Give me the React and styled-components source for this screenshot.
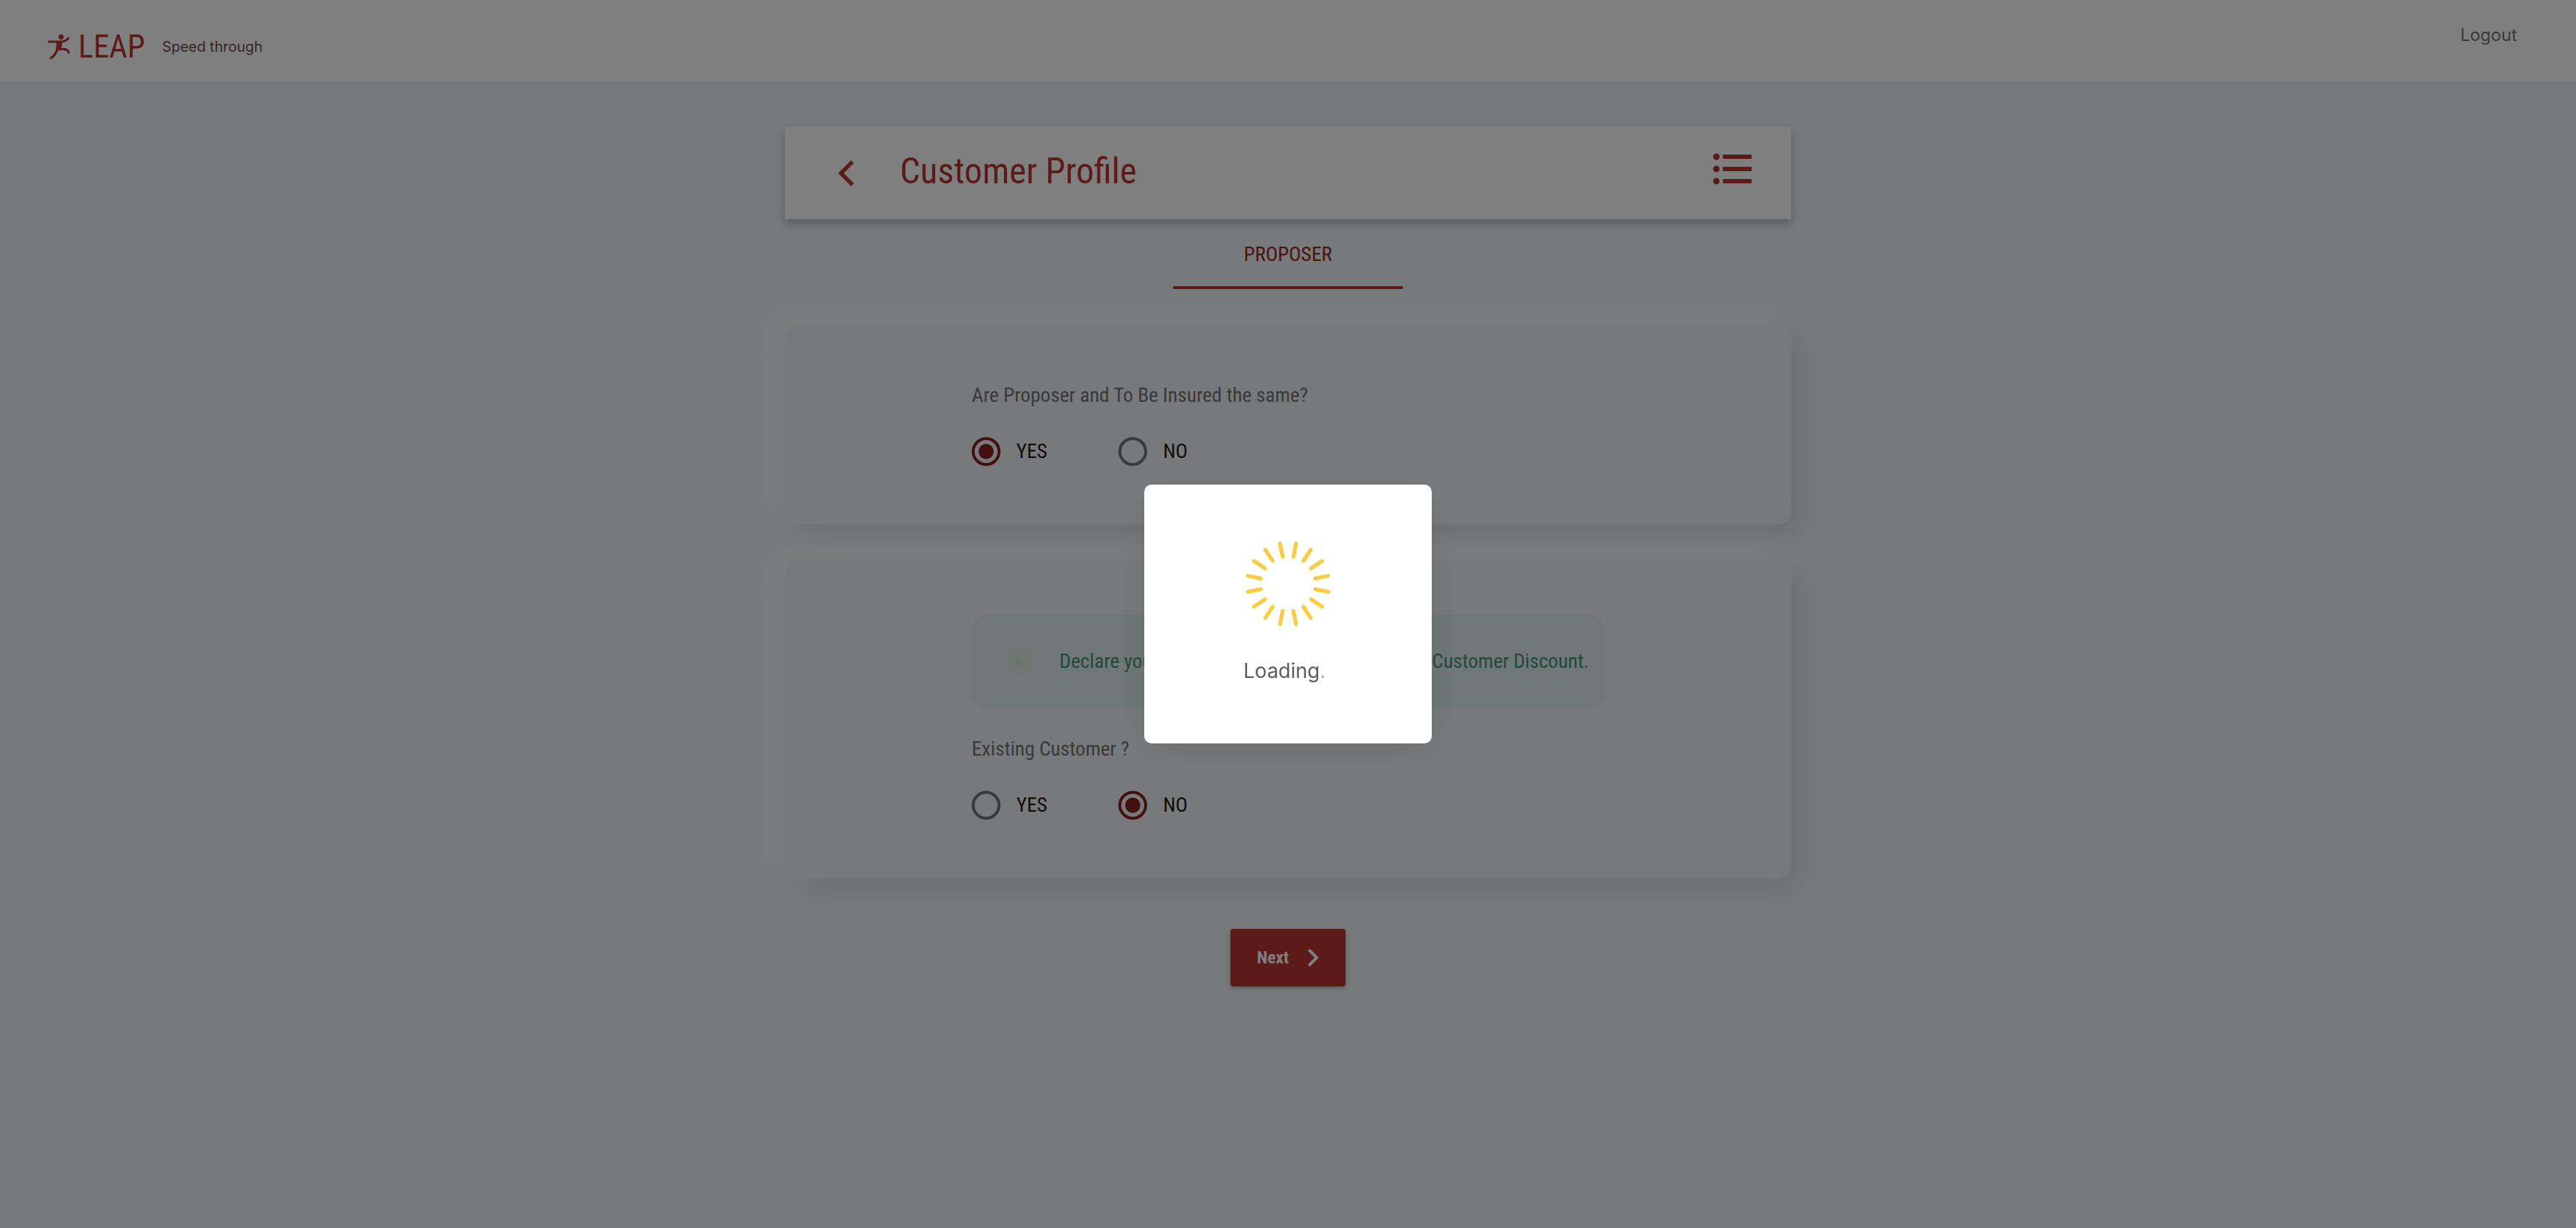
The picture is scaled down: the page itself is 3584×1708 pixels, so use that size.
import React from "react";
import styled, { createGlobalStyle } from "styled-components";

const narrow = `"Liberation Sans Narrow", "Roboto Condensed", Roboto, "Liberation Sans", sans-serif`;
const grotesk = `Inter, "Liberation Sans", sans-serif`;
const red = "#b93432";

const GlobalStyle = createGlobalStyle`
  *, *::before, *::after { box-sizing: border-box; }
  html, body, #root { min-height: 100vh; }
  body { margin: 0; background: #f0f3f7; font-family: ${narrow}; font-size: 28px; line-height: 40px; }
  h1, p, fieldset, legend { margin: 0; padding: 0; border: 0; font-weight: 400; }
`;

const Header = styled.header`
  display: flex;
  justify-content: space-between;
  align-items: flex-start;
  height: 116px;
  padding: 29px 82px 0 66px;
  background: #fff;
  border-bottom: 2px solid #e4e5e7;
`;

const Brand = styled.div`
  display: flex;
  align-items: center;
  height: 72px;
  font-family: ${grotesk};
`;

const BrandName = styled.span`
  margin: 0 24px 0 9px;
  font-family: ${narrow};
  font-size: 44px;
  color: ${red};
`;

const Tagline = styled.span`
  font-size: 20px;
  color: #6a4c4c;
`;

const Logout = styled.a`
  font-family: ${grotesk};
  font-size: 24px;
  color: #757575;
  text-decoration: none;
`;

const Main = styled.main`
  display: flex;
  flex-direction: column;
  align-items: center;
  width: 100%;
  max-width: 1400px;
  margin: 0 auto;
  padding: 60px 0;
`;

const TitleBar = styled.div`
  display: flex;
  align-items: center;
  width: 100%;
  height: 129px;
  padding: 0 52px 2px 64px;
  background: #fff;
  box-shadow: 0 6px 12px rgba(0, 0, 0, 0.25);
`;

const IconButton = styled.button`
  display: flex;
  padding: 0;
  border: 0;
  background: none;
  color: ${red};
`;

const Title = styled.h1`
  flex: 1;
  margin: 0 0 4px 24px;
  font-size: 50px;
  line-height: 60px;
  color: ${red};
`;

const Tab = styled.button`
  width: 320px;
  height: 97px;
  padding: 4px 0 0;
  border: 0;
  border-bottom: 4px solid ${red};
  background: none;
  font: inherit;
  color: #982626;
`;

const Card = styled.section`
  display: flex;
  flex-direction: column;
  gap: 36px;
  width: 100%;
  margin-top: 50px;
  padding: ${(p) => (p.$banner ? "74px 260px 82px" : "78px 260px 82px")};
  border-radius: 20px;
  background: #f0f3f7;
  box-shadow: 16px 16px 40px #dcdedf, -16px -16px 40px #fff;
`;

const Question = styled.fieldset`
  display: flex;
  flex-direction: column;
  color: #747474;
`;

const Options = styled.div`
  display: flex;
  gap: 99px;
  margin-top: 38px;
`;

const Option = styled.label`
  display: flex;
  align-items: center;
  gap: 22px;
  color: #1c1c1c;
`;

const Radio = styled.input`
  appearance: none;
  width: 40px;
  height: 40px;
  margin: 0;
  border: 4px solid #747474;
  border-radius: 50%;
  &:checked {
    border-color: #86201e;
    background: radial-gradient(circle, #86201e 10px, transparent 11px);
  }
`;

const Banner = styled.div`
  display: flex;
  align-items: center;
  gap: 36px;
  height: 132px;
  padding-left: 46px;
  border-radius: 24px;
  background: #e0f0ee;
  color: #48906f;
  white-space: nowrap;

  svg { flex-shrink: 0; }
`;

const Next = styled.button`
  display: flex;
  align-items: center;
  justify-content: center;
  gap: 24px;
  width: 160px;
  height: 80px;
  margin-top: 70px;
  padding: 0;
  border: 0;
  border-radius: 4px;
  background: ${red};
  box-shadow: 0 2px 6px rgba(0, 0, 0, 0.3);
  font: 700 24px ${narrow};
  color: #fff;
`;

const Overlay = styled.div`
  position: fixed;
  inset: 0;
  display: flex;
  align-items: center;
  justify-content: center;
  background: rgba(0, 0, 0, 0.5);
`;

const Modal = styled.div`
  display: flex;
  flex-direction: column;
  align-items: center;
  gap: 41px;
  width: 400px;
  height: 360px;
  padding-top: 78px;
  border-radius: 10px;
  background: #fff;
  box-shadow: 0 12px 48px rgba(0, 0, 0, 0.08);
  font-family: ${grotesk};
  color: #5c5c5e;
`;

const LoadingText = styled.p`
  width: 124px;
`;

const LoadingDot = styled.span`
  color: #b4b4b6;
`;

function Runner() {
  return (
    <svg width="34" height="36" viewBox="76 82 102 108" fill="none" stroke={red} strokeLinecap="round" strokeLinejoin="round" aria-hidden="true">
      <circle cx="133" cy="95" r="11" fill={red} stroke="none" />
      <path d="M82 115H128Q150 116 164 100" strokeWidth="9" />
      <path d="M116 113L137 115L132 142L114 152Z" fill={red} strokeWidth="4" />
      <path d="M118 145Q110 171 91 183" strokeWidth="10" />
      <path d="M122 146H142Q161 146 165 160" strokeWidth="10" />
    </svg>
  );
}

function Spinner() {
  const spokes = Array.from({ length: 16 }, (_, i) => 11.25 + i * 22.5);
  return (
    <svg width="120" height="120" viewBox="-60 -60 120 120" stroke="#fbcb43" strokeWidth="5.4" strokeLinecap="round" aria-hidden="true">
      {spokes.map((a) => (
        <line key={a} x1="0" y1="-38.5" x2="0" y2="-57" transform={`rotate(${a})`} />
      ))}
    </svg>
  );
}

function YesNo({ legend, name, value }) {
  return (
    <Question>
      <legend>{legend}</legend>
      <Options>
        {["YES", "NO"].map((o) => (
          <Option key={o}>
            <Radio type="radio" name={name} value={o} defaultChecked={o === value} />
            {o}
          </Option>
        ))}
      </Options>
    </Question>
  );
}

export default function App() {
  return (
    <>
      <GlobalStyle />
      <Header>
        <Brand>
          <Runner />
          <BrandName>LEAP</BrandName>
          <Tagline>Speed through</Tagline>
        </Brand>
        <Logout href="#logout">Logout</Logout>
      </Header>
      <Main>
        <TitleBar>
          <IconButton type="button" aria-label="Back">
            <svg width="72" height="40" viewBox="0 0 72 40" fill="none" stroke="currentColor" strokeWidth="5.5" aria-hidden="true">
              <path d="M30 5L14 21L30 37" />
            </svg>
          </IconButton>
          <Title>Customer Profile</Title>
          <IconButton type="button" aria-label="Menu">
            <svg width="60" height="60" viewBox="0 0 60 60" fill="currentColor" aria-hidden="true">
              {[8, 25, 42].map((y) => (
                <g key={y}>
                  <circle cx="8" cy={y} r="4.5" />
                  <rect x="17" y={y - 3} width="40" height="6" />
                </g>
              ))}
            </svg>
          </IconButton>
        </TitleBar>
        <Tab type="button">PROPOSER</Tab>
        <Card>
          <YesNo legend="Are Proposer and To Be Insured the same?" name="same" value="YES" />
        </Card>
        <Card $banner>
          <Banner>
            <svg width="40" height="40" viewBox="0 0 40 40" aria-hidden="true">
              <circle cx="20" cy="20" r="20" fill="#deeee5" />
              <circle cx="20" cy="20" r="6.5" fill="#cfe9df" />
            </svg>
            <p>Declare your existing policies to claim Existing Customer Discount.</p>
          </Banner>
          <YesNo legend="Existing Customer ?" name="existing" value="NO" />
        </Card>
        <Next type="button">
          Next
          <svg width="18" height="28" viewBox="0 0 18 28" fill="none" stroke="currentColor" strokeWidth="4" aria-hidden="true">
            <path d="M4 3L15 14L4 25" />
          </svg>
        </Next>
      </Main>
      <Overlay>
        <Modal role="dialog" aria-label="Loading">
          <Spinner />
          <LoadingText>Loading<LoadingDot>.</LoadingDot></LoadingText>
        </Modal>
      </Overlay>
    </>
  );
}
